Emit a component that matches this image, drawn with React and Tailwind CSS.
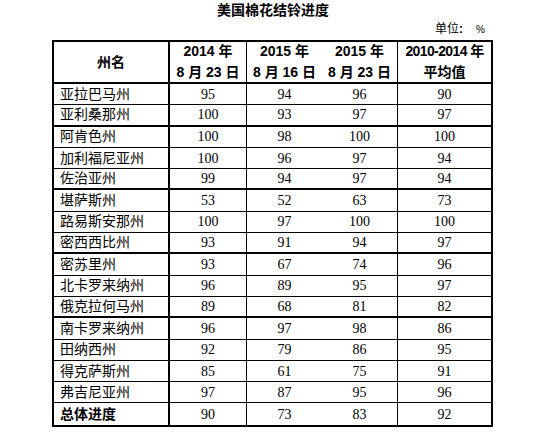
import React from 'react';

const rows = [
  ['亚拉巴马州', '95', '94', '96', '90'],
  ['亚利桑那州', '100', '93', '97', '97', true],
  ['阿肯色州', '100', '98', '100', '100'],
  ['加利福尼亚州', '100', '96', '97', '94'],
  ['佐治亚州', '99', '94', '97', '94', true],
  ['堪萨斯州', '53', '52', '63', '73'],
  ['路易斯安那州', '100', '97', '100', '100'],
  ['密西西比州', '93', '91', '94', '97', true],
  ['密苏里州', '93', '67', '74', '96'],
  ['北卡罗来纳州', '96', '89', '95', '97'],
  ['俄克拉何马州', '89', '68', '81', '82', true],
  ['南卡罗来纳州', '96', '97', '98', '86'],
  ['田纳西州', '92', '79', '86', '95'],
  ['得克萨斯州', '85', '61', '75', '91'],
  ['弗吉尼亚州', '97', '87', '95', '96'],
];

const cjk = "font-['Liberation_Sans','Noto_Sans_CJK_SC',sans-serif]";
const num = "font-['Liberation_Serif','Noto_Sans_CJK_SC',serif]";

const Row = ({ r, last }) => {
  const [name, a, b, c, d, thick] = r;
  const line = last ? '' : thick ? 'border-b-2' : 'border-b';
  return (
    <div className={`flex h-[21.3px] border-black ${line}`}>
      <div className={`w-[116px] border-r-2 border-black pl-[6px] flex items-center text-[14px] ${cjk} ${r.bold ? 'font-bold' : ''}`}>
        {name}
      </div>
      <div className={`w-[77px] border-r border-black flex items-center justify-center text-[14px] ${num}`}>{a}</div>
      <div className={`w-[75px] flex items-center justify-center text-[14px] ${num}`}>{b}</div>
      <div className={`w-[76px] border-r border-black flex items-center justify-center text-[14px] ${num}`}>{c}</div>
      <div className={`flex-1 flex items-center justify-center text-[14px] ${num}`}>{d}</div>
    </div>
  );
};

export default function App() {
  const total = ['总体进度', '90', '73', '83', '92'];
  total.bold = true;
  return (
    <div className="w-[546px] h-[444px] bg-white text-black overflow-hidden">
      <div className={`h-[21px] leading-[21px] text-center text-[14px] font-bold ${cjk}`}>美国棉花结铃进度</div>
      <div className={`h-[19px] leading-[17px] flex items-start justify-end pr-[61px] ${cjk}`}>
        <span className="text-[12px]">单位</span>
        <span className="text-[12px] font-bold">:</span>
        <span className="ml-[13px] text-[10px]">%</span>
      </div>
      <div className="ml-[52px] w-[441px] border-2 border-black">
        <div className={`flex h-[42px] border-b-2 border-black font-bold text-[14px] leading-[21px] ${cjk}`}>
          <div className="w-[116px] border-r-2 border-black flex items-center justify-center">州名</div>
          <div className="w-[77px] border-r border-black flex flex-col items-center justify-center">
            <span>2014 年</span>
            <span>8 月 23 日</span>
          </div>
          <div className="w-[75px] flex flex-col items-center justify-center">
            <span>2015 年</span>
            <span>8 月 16 日</span>
          </div>
          <div className="w-[76px] border-r border-black flex flex-col items-center justify-center">
            <span>2015 年</span>
            <span>8 月 23 日</span>
          </div>
          <div className="flex-1 flex flex-col items-center justify-center">
            <span className="tracking-[-0.6px]">2010-2014 年</span>
            <span>平均值</span>
          </div>
        </div>
        {rows.map((r) => (
          <Row key={r[0]} r={r} />
        ))}
        <Row r={total} last />
      </div>
    </div>
  );
}
